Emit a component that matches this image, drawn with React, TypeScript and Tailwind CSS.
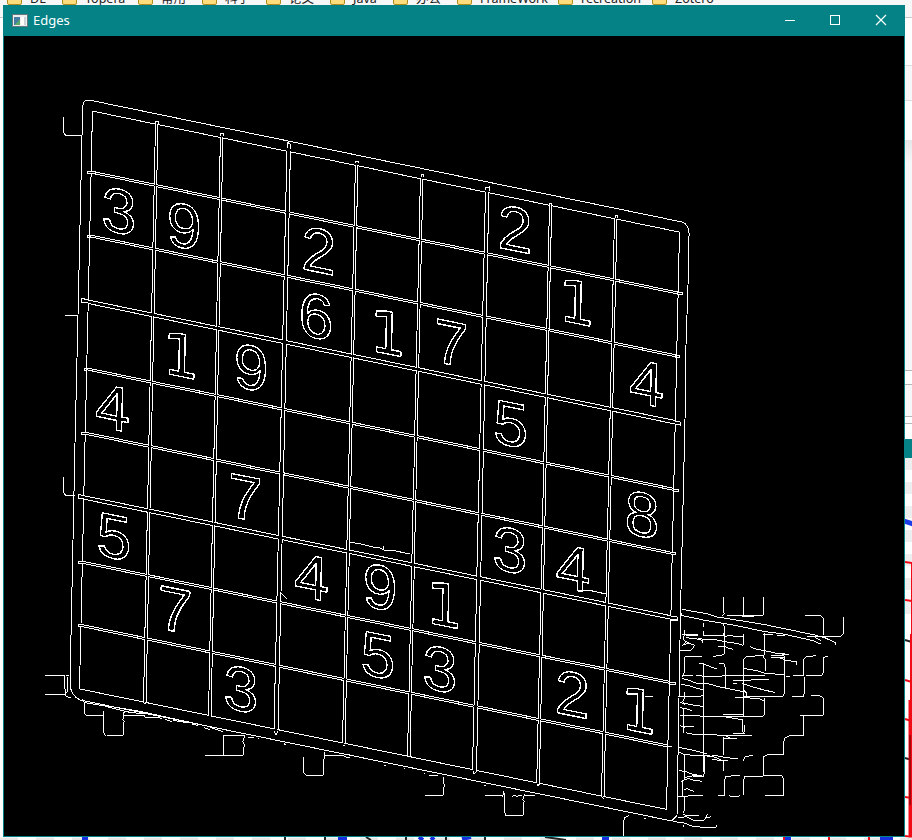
import React from "react";

type Line = [number, number, number, number];

// Left and right contour of every column divider: [x at top, y top, x at bottom, y bottom]
const columns: { a: Line; b: Line }[] = [
  { a: [92.5, 111, 79.5, 689], b: [92.5, 111, 79.5, 689] },
  { a: [155.5, 123, 143.5, 702], b: [158, 123, 146, 702] },
  { a: [220.5, 135, 208.5, 715], b: [223, 135, 211, 715] },
  { a: [287, 148, 274, 731], b: [290.5, 148, 278, 731] },
  { a: [355.5, 162, 342.5, 744], b: [358, 162, 345, 744] },
  { a: [420.5, 176, 407.5, 757], b: [423, 176, 410, 757] },
  { a: [485.5, 190, 472.5, 770], b: [489, 190, 476.5, 770] },
  { a: [549.5, 204, 536.7, 784], b: [551.7, 204, 539.3, 784] },
  { a: [614.5, 217, 601.5, 797], b: [617, 217, 604, 797] },
  { a: [679.5, 232, 666.5, 809], b: [679.5, 232, 666.5, 809] },
];

// Upper and lower contour of every row divider
const rows: { a: Line; b: Line }[] = [
  { a: [92, 111, 679, 232], b: [92, 111, 679, 232] },
  { a: [88, 170.5, 680, 292.5], b: [88, 172.5, 680, 294.5] },
  { a: [88, 234.5, 679, 355.5], b: [88, 236.5, 679, 357.5] },
  { a: [81, 298.5, 680, 421.5], b: [81, 302, 680, 425] },
  { a: [85, 367.5, 677, 489], b: [85, 369.5, 677, 491] },
  { a: [82, 431.5, 673, 552.5], b: [82, 433.5, 673, 554.5] },
  { a: [78, 494.5, 677, 617], b: [78, 498, 677, 620.5] },
  { a: [79, 560.5, 675, 682.5], b: [79, 562.5, 675, 684.5] },
  { a: [79, 624, 670, 745.5], b: [79, 626, 670, 747.5] },
  { a: [80, 689, 667, 809.5], b: [80, 689, 667, 809.5] },
];

function cross(v: Line, h: Line) {
  const [x1, y1, x2, y2] = v;
  const [x3, y3, x4, y4] = h;
  const d = (x1 - x2) * (y3 - y4) - (y1 - y2) * (x3 - x4);
  const p = x1 * y2 - y1 * x2;
  const q = x3 * y4 - y3 * x4;
  return `${((p * (x3 - x4) - (x1 - x2) * q) / d).toFixed(1)},${((p * (y3 - y4) - (y1 - y2) * q) / d).toFixed(1)}`;
}

const cells: string[] = [];
for (let r = 0; r < 9; r++)
  for (let c = 0; c < 9; c++)
    cells.push(
      [
        cross(columns[c].b, rows[r].b),
        cross(columns[c + 1].a, rows[r].b),
        cross(columns[c + 1].a, rows[r + 1].a),
        cross(columns[c].b, rows[r + 1].a),
      ].join(" ")
    );

const digits: [string, number, number][] = [
  ["3", 119, 211], ["9", 184, 226], ["2", 318.7, 250.5], ["2", 515, 229],
  ["6", 316, 316], ["1", 389, 332.5], ["7", 451, 343], ["1", 578, 302],
  ["4", 646.5, 383], ["1", 182, 355], ["9", 251, 367.7], ["4", 112.5, 407.7],
  ["5", 510.7, 424], ["7", 245, 497.5], ["8", 642, 514.7], ["5", 114, 536.5],
  ["3", 510, 550], ["4", 573.3, 568], ["4", 311.5, 577], ["9", 380, 587.3],
  ["1", 445.5, 604.5], ["7", 175, 609.5], ["5", 378, 655.3], ["3", 440, 669],
  ["3", 241, 689], ["2", 572.3, 694.2], ["1", 640, 710.3],
];

function EdgeImage() {
  return (
    <svg viewBox="4 36 900 800" className="block h-[800px] w-[900px] bg-black" fill="none" stroke="#fff" strokeWidth="1">
      <defs>
        <filter id="binary" filterUnits="userSpaceOnUse" x="4" y="36" width="900" height="800" colorInterpolationFilters="sRGB">
          <feComponentTransfer>
            <feFuncA type="discrete" tableValues="0 0 1 1 1" />
          </feComponentTransfer>
        </filter>
      </defs>
      <g shapeRendering="crispEdges">
        {/* Board frame */}
        <path d="M83 105Q83 100 89 100L682 222Q690 225 689 236L688 285L686 345L685 420L681 590L680 640L677 815L672 821L540 794L290 743L80 700Q70 695 70 683L73 540L75 443L78 315L82 136Z" />
        {cells.map((p, i) => (
          <polygon key={i} points={p} />
        ))}
        {/* Overshooting ends of the dividers */}
        <path d="M91 171H87V173H91M91 235H87V237H91M88 300L81 298V302L88 303M87 368H84V370H87M85 432H81V434H85M84 496L78 494V498L84 499M82 561H78V563H82M80 624H78V626H80M677 292H682V294H677M675 355H679V357H675M675 421L680 422V425L675 424M673 489H678V491H673M671 552H675V554H671M671 616L677 617V620L671 620M669 682H675V684H669M667 746H671V747" />
        <path d="M155 124V121H158V124M220 136V133H223V136M287 148V142L290 144V149M355 163V161H358V163M421 177V174H423V177M485 190V188L489 187V191M549 205V203H551V205M615 218V215H617V218M144 703L146 704M274 731L276 735L278 731M343 745H345M408 756H410M473 771L474 774L477 771M537 784V786L540 784M602 797L604 799" />
        <path d="M63.5 117V131Q64 136 69 136L82 135M65 315H78M63.5 477V492L66 496L75 495M349 542L361 544L373 547H378L384 550H391L410 554M383 546V549M281 593L287 599M581 590H588L606 594M645 696H653" />

        {/* Traces under the lower-left edge */}
        <g transform="translate(40 540) scale(.33333)" strokeWidth="3">
          <path d="M15 406H73V440L78 455L75 465H15M78 408L88 405M82 412V455L73 463L87 474H94M126 478L133 488V520L140 526H190M133 488L190 497L255 514M190 513V578L200 589L207 586H250V552L253 545L248 540L252 526V517L268 513M252 526H315V532L345 531L365 535M205 498L300 514L400 536L500 558L548 575M265 518L310 520M374 538L395 545M400 541L440 548M456 552L475 557M493 563L510 570" />
          <path d="M496 646H610V628L614 616L608 605L614 588H550V646M624 591L641 594M654 596H658M732 610L737 614" />
        </g>
        {/* Traces under the lower edge */}
        <g transform="translate(270 580) scale(.33333)" strokeWidth="3">
          <path d="M101 530V577L110 589L116 586H160V560L164 516M164 526H220L228 532L241 531M222 523H240M41 491L46 494M341 554L347 557M401 566H405M462 580H466M477 586H505M522 592V612L525 618L520 625V646H466M645 646H700V633L704 642V697L708 708L716 706H760V670L764 665L758 660L764 642M670 646H690L700 650M725 650L735 645L740 649L755 645M765 646H794M643 615L648 618" />
        </g>

        {/* Fragmented contours to the right of the board */}
        <g transform="translate(530 590) scale(.33333)" strokeWidth="3">
          <path d="M455 58L535 72L556 80L700 103L850 134L885 144L917 158V165M452 76L520 90L610 105L700 124L760 132L850 152L874 163M856 143L874 153" />
          <path d="M580 21V63L583 71L577 77M641 21V78M700 21V76H590M637 79H672M825 76L872 77L880 84V135M940 81V130L934 139H832M880 139L916 158" />
          <path d="M456 76V68M463 120V138L458 144L467 155L458 168M456 133L505 134M468 135L505 138M468 143L500 147L518 151V160M522 99V112M522 122V138H580V130M580 102L584 116V190L577 195L550 199M583 140L600 136L618 140H640M640 132V166L622 160L600 158L560 150L535 150L505 145M468 155L493 166L485 180L451 182M458 164L480 160M565 170L583 169L594 174L608 178" />
          <path d="M465 200H516M464 200V235L461 256L455 262M508 221L522 222L540 230L560 236M522 222V545M568 221H583L586 235V297M456 256H490M498 257L535 259L620 257L705 256M455 265L475 270L500 280L535 281L565 290L610 299L650 307M453 283L480 288L500 295L522 299" />
          <path d="M705 128V190L700 200L706 210V243M700 134H730M741 137H764M660 170L680 178L700 181L735 189L776 194M765 188L758 193L765 202V308L758 319H640M722 196H762M724 202H765M746 202L765 210L800 216V226M640 210L650 199L700 197M640 210V380M640 235L680 242L705 250L765 254M640 256H705M767 259H780M790 258L818 257M610 271H640M610 282H622M618 271L665 270L718 269M636 280L665 290L703 300L734 307M690 297L725 306" />
          <path d="M893 198L882 202V245L874 257H828M820 258V210L829 200L858 197M824 260V307L820 320H785M844 318H870L880 323V375L870 377H810M820 377V437L782 436L765 443L761 455V495H712L700 500V555M705 325V370L700 379H522M615 322H640M640 322L690 327L705 335M642 300L650 310V320" />
          <path d="M463 305V325L458 335L465 345M445 319H490L505 320L522 316M451 338L490 345L522 350M451 353L472 357L487 363M462 358V430M451 377L500 376L520 380M451 408L475 410H493M463 412L475 408M467 428L495 434L522 433L580 436L612 438L665 438M580 375H642M580 380L620 386L638 390V425L645 432H610M644 404V425M582 440V494M582 445L620 447M588 438L605 447" />
          <path d="M447 472L485 480L522 489L532 493M447 486L462 493L490 496H530L560 503L580 513H593M463 493V570L458 575V620M522 495L523 550L518 560H490M531 499L560 497L590 503L623 506M547 507L575 513M582 514V542M640 513L645 500L668 496M447 542L465 544L485 552L522 559M452 574L475 566L490 570L515 574M463 563L490 557L518 559M463 598L475 596M467 595L493 604M445 620L490 617L518 618" />
          <path d="M583 618V575L588 559L630 556M640 614V570L645 559L755 557L762 567V616H705M564 616H582M598 618L625 619L631 616M463 620V662L458 670L466 677H508M443 683L470 680L490 690L521 693L528 682L542 681M528 682L533 672M430 695L460 698L485 708L520 712L560 711V706M461 705V710M425 692L440 680" />
          <path d="M281 740V693L285 682L297 676M342 683L347 687M424 88H438L443 91" />
        </g>
      </g>

      {/* Outlined digits, slanted along the board rows */}
      <g fontFamily="'Liberation Sans', Arial, sans-serif" fontSize="62.5" textAnchor="middle" strokeWidth="1.05" filter="url(#binary)">
        {digits.map(([d, x, y], i) =>
          d === "1" ? (
            <text key={i} transform={`matrix(1 .2 -.02 1 ${x} ${y})`} x="-1" y="21.6" fontFamily="'DejaVu Sans', sans-serif" fontSize="58.5">
              {d}
            </text>
          ) : (
            <text key={i} transform={`matrix(1 .2 -.02 1 ${x} ${y})`} x="0" y="21.6">
              {d}
            </text>
          )
        )}
      </g>
    </svg>
  );
}

function Folder() {
  return <span className="h-[10px] w-[15px] shrink-0 rounded-[2px] border border-[#b08a1a] bg-[#ffdc7c]" />;
}

const bookmarks: [string, string][] = [
  ["DL", "w-[55px]"], ["Topera", "w-[76px]"], ["常用", "w-[64px]"], ["科学", "w-[64px]"],
  ["论文", "w-[64px]"], ["Java", "w-[63px]"], ["办公", "w-[64px]"], ["FrameWork", "w-[101px]"],
  ["recreation", "w-[94px]"], ["Zotero", "w-[80px]"],
];

function Behind() {
  return (
    <div className="flex h-[840px] w-[912px] flex-col bg-white">
      <div className="flex h-[18px] shrink-0 overflow-hidden border-b border-[#c9c9c9] bg-[#f7f7f7] pl-[7px] text-[12.5px] text-[#202020]">
        {bookmarks.map(([name, width]) => (
          <div key={name} className={`-mt-[5px] flex h-[10px] shrink-0 ${width}`}>
            <Folder />
            <span className="-mt-[5px] ml-[8px] h-[18px] whitespace-nowrap leading-[18px]">{name}</span>
          </div>
        ))}
      </div>
      <div className="ml-[450px] flex h-[440px] shrink-0 flex-col">
        <div className="h-[48px] shrink-0 border-b border-[#dddddd] bg-white" />
        <div className="h-[35px] shrink-0 border-b border-[#ddd] bg-[#f7f7f7]" />
        <div className="h-[39px] shrink-0 bg-white" />
        <div className="h-[230px] shrink-0 bg-gradient-to-b from-[#e6e6e6] via-[#f7f7f7] via-10% to-[#f7f7f7]" />
        <div className="h-[15px] shrink-0 border-y border-[#b5b5b5]" />
        <div className="h-[31px] shrink-0 bg-[#f7f7f7]" />
        <div className="h-[8px] shrink-0 border-y border-[#b5b5b5]" />
        <div className="h-[15px] shrink-0" />
        <div className="h-[19px] shrink-0 bg-[#048286]" />
      </div>
      <svg className="block h-[382px] w-[912px] shrink-0" viewBox="0 458 912 382">
        {[458, 482, 506, 530, 554, 578, 602].map((y) => (
          <rect key={y} x="905" y={y} width="7" height="12" fill="#eeeeee" />
        ))}
        <path d="M904 521L913 524" stroke="#1d3de8" strokeWidth="5" />
        <path d="M905 562L912 563M905 600L912 601M905 680L912 682M905 719L912 721M905 797L912 798M905 836L912 837" stroke="#f00b16" strokeWidth="2" />
        <path d="M905 640L912 642M905 758L912 760" stroke="#222" strokeWidth="2" />
        <path d="M911.5 562V840" stroke="#f00b16" strokeWidth="1" />
        <path d="M911 634V840M909.5 700V840" stroke="#f00b16" strokeWidth="2" />
        <path d="M910 735V805" stroke="#5a0505" strokeWidth="1" />
        <path d="M0 839H912" stroke="#e8e8e8" strokeWidth="3" strokeDasharray="18 18" />
        <path d="M285 837V840M325 837V840M366 837L371 840M406 837V840M446 837V840M485 837V840M545 837L566 840" stroke="#222" strokeWidth="2" />
        <path d="M82 839H88M338 839H347M419 837L423 840M434 837L431 840M462 839L471 837M602 839H609M785 839H791M880 839H893" stroke="#1731e0" strokeWidth="4" />
        <path d="M829 837V840M869 837V840M784 837V840" stroke="#f00b16" strokeWidth="2" />
      </svg>
    </div>
  );
}

export default function App() {
  return (
    <div className="relative h-[840px] w-[912px] overflow-hidden font-['Noto_Sans','Noto_Sans_CJK_SC',sans-serif]">
      <Behind />
      <div className="absolute left-[3px] top-[5px] h-[832px] w-[902px] border border-t-0 border-[#048286] bg-black">
        <header className="flex h-[31px] items-center bg-[#048286] pl-[8px] text-white">
          <svg className="h-[13px] w-[16px] shrink-0" viewBox="0 0 16 13" shapeRendering="crispEdges">
            <rect width="16" height="13" fill="#65777b" />
            <rect x="1" y="1" width="14" height="11" fill="#eeeeee" />
            <rect x="2" y="3" width="6" height="8" fill="#477da0" />
            <path d="M2 11L8 5V11Z" fill="#59a96b" />
            <rect x="9" y="3" width="3" height="8" fill="#fff" />
            <rect x="12" y="3" width="2" height="8" fill="#cdd3d8" />
          </svg>
          <span className="-mt-px ml-[5px] text-[13px] leading-[18px]">Edges</span>
          <svg className="ml-auto h-[31px] w-[135px]" viewBox="0 0 135 31" fill="none" stroke="#fff">
            <path d="M16 15.5H26" />
            <rect x="61.5" y="10.5" width="9" height="9" />
            <path d="M107 10L117 20M117 10L107 20" strokeWidth="1.2" />
          </svg>
        </header>
        <EdgeImage />
      </div>
    </div>
  );
}
